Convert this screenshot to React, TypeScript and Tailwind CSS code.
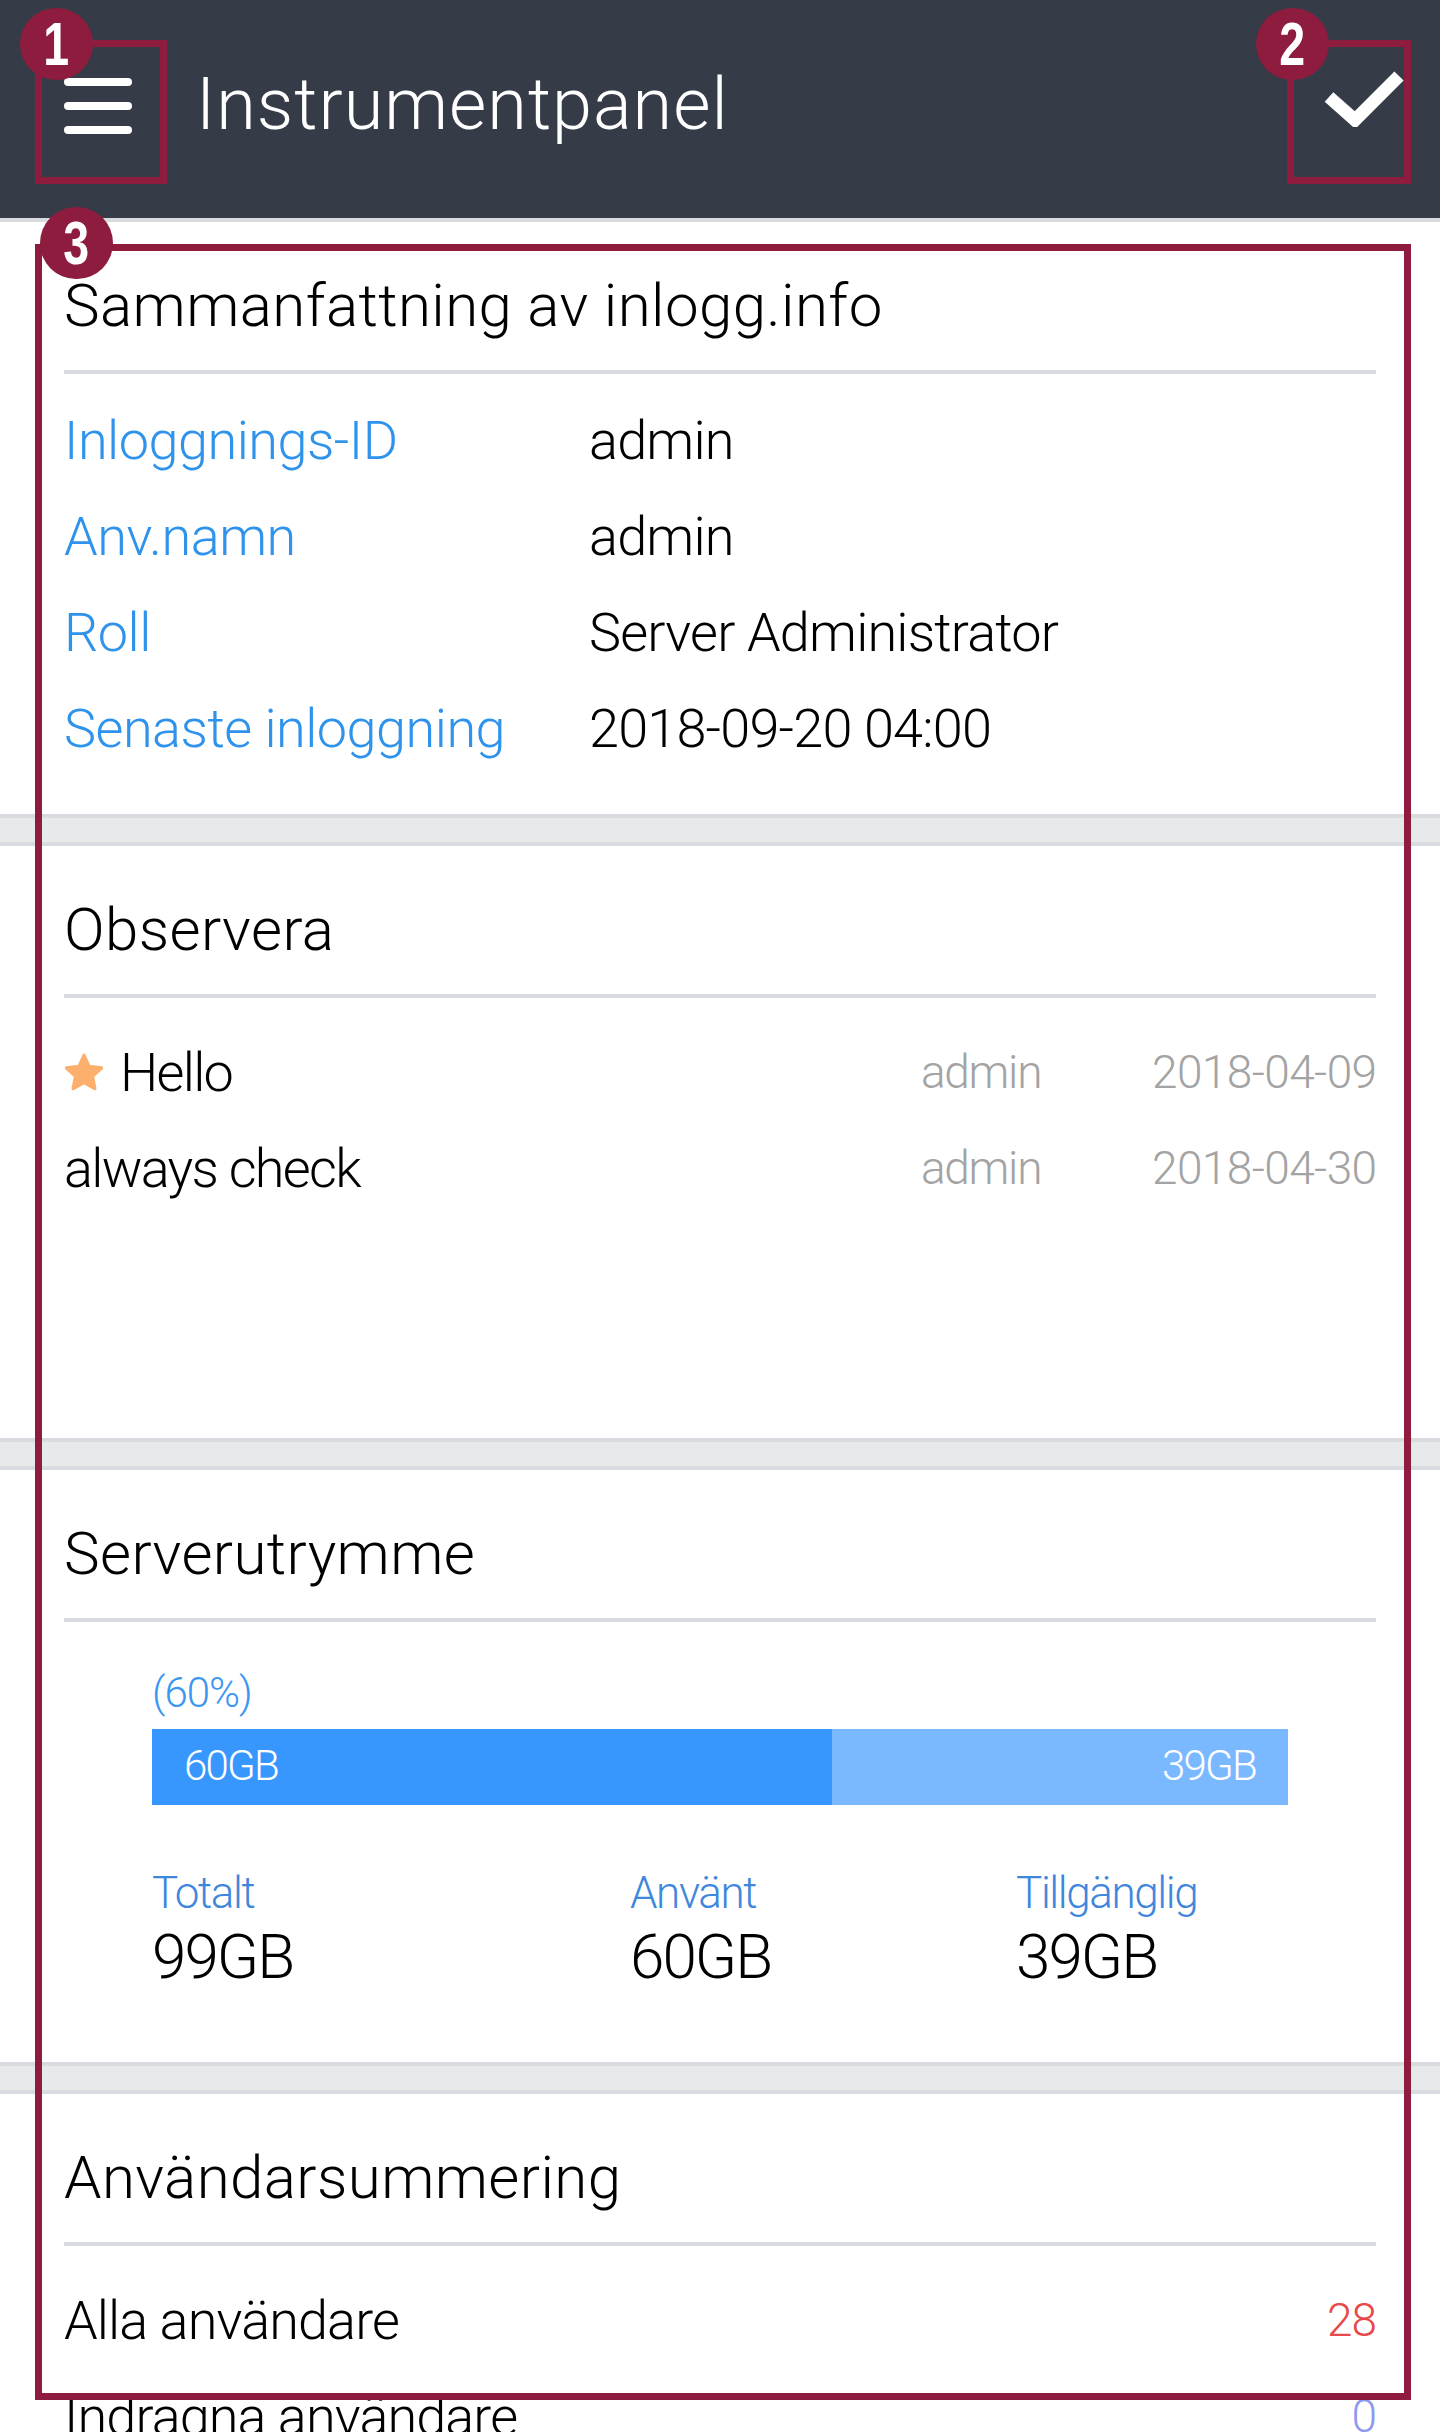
const font = "font-['Roboto','Noto_Sans',sans-serif]";

function Band() {
  return <div className="h-8 border-y-4 border-[#d8dbe0] bg-[#e8e9eb]" />;
}

function Section({ title, children }: { title: string; children: React.ReactNode }) {
  return (
    <section className="h-[592px] bg-white px-16">
      <div className="flex h-[152px] items-center border-b-4 border-[#d8dbe0] pt-[20px]">
        <h2 className="text-[60px] leading-none font-light tracking-[0.4px] text-black">{title}</h2>
      </div>
      {children}
    </section>
  );
}

function Info({ label, value }: { label: string; value: string }) {
  return (
    <div className="flex h-24 items-center text-[54px] font-light tracking-[-0.8px]">
      <span className="w-[525px] tracking-[-0.5px] text-[#2f93ec]">{label}</span>
      <span className="text-black">{value}</span>
    </div>
  );
}

function Note({ star, text, date }: { star?: boolean; text: string; date: string }) {
  return (
    <div className="flex h-24 items-center">
      {star && (
        <svg viewBox="0 0 24 24" className="mr-4 h-10 w-10 shrink-0">
          <path fill="#fdb06e" stroke="#fdb06e" strokeWidth="2" strokeLinejoin="round" d="M12 2l3 6.600 7.500 1-5.400 5 1.400 7.400L12 18.400 5.500 22l1.400-7.400-5.400-5 7.500-1z" />
        </svg>
      )}
      <span className="flex-1 text-[54px] font-light tracking-[-1.7px] text-black">{text}</span>
      <span className="w-[231px] text-[46px] font-light tracking-[-1.3px] text-[#a3a3a3]">admin</span>
      <span className="w-[224px] text-right text-[46px] font-light tracking-[-0.6px] whitespace-nowrap text-[#a3a3a3]">{date}</span>
    </div>
  );
}

function Stat({ label, value, cls }: { label: string; value: string; cls: string }) {
  return (
    <div className={cls}>
      <div className="text-[44px] leading-[52px] font-light tracking-[-1.400px] text-[#3f87dd]">{label}</div>
      <div className="mt-[2px] text-[62px] leading-[72px] font-light tracking-[-2px] text-black">{value}</div>
    </div>
  );
}

function UserRow({ label, value, color }: { label: string; value: string; color: string }) {
  return (
    <div className="flex h-24 items-center justify-between">
      <span className="text-[54px] font-light tracking-[-0.9px] text-black">{label}</span>
      <span className={`text-[46px] font-light tracking-[-1px] ${color}`}>{value}</span>
    </div>
  );
}

function Marker({ n, cls }: { n: string; cls: string }) {
  return (
    <div className={`absolute flex h-[72px] w-[73px] items-center justify-center rounded-full bg-[#8e1c3e] text-[62px] leading-none font-bold text-white font-['Liberation_Sans',sans-serif] ${cls}`}>
      <span className="inline-block scale-x-75">{n}</span>
    </div>
  );
}

export default function App() {
  return (
    <div className={`relative h-[2432px] w-[1440px] overflow-hidden bg-white ${font}`}>
      <header className="flex h-[222px] items-center border-b-4 border-[#d8dbe0] bg-[#353b47] pb-[8px] pl-16 pr-9">
        <div className="flex w-[132px] flex-col gap-4 pt-[2px]">
          <span className="h-2 w-[68px] rounded-full bg-white" />
          <span className="h-2 w-[68px] rounded-full bg-white" />
          <span className="h-2 w-[68px] rounded-full bg-white" />
        </div>
        <h1 className="flex-1 text-[72px] leading-none font-light tracking-[1px] text-white">Instrumentpanel</h1>
        <svg viewBox="0 0 80 57" className="h-[57px] w-[80px] -translate-y-[7px]">
          <path d="M5 27 L31 50 L75 6" fill="none" stroke="white" strokeWidth="13" />
        </svg>
      </header>

      <Section title="Sammanfattning av inlogg.info">
        <div className="pt-[18px]">
          <Info label="Inloggnings-ID" value="admin" />
          <Info label="Anv.namn" value="admin" />
          <Info label="Roll" value="Server Administrator" />
          <Info label="Senaste inloggning" value="2018-09-20 04:00" />
        </div>
      </Section>
      <Band />

      <Section title="Observera">
        <div className="pt-[26px]">
          <Note star text="Hello" date="2018-04-09" />
          <Note text="always check" date="2018-04-30" />
        </div>
      </Section>
      <Band />

      <Section title="Serverutrymme">
        <div className="px-[88px] pt-[41px]">
          <div className="text-[42px] leading-[60px] font-light tracking-[-1px] text-[#3a96f0]">(60%)</div>
          <div className="mt-[6px] flex h-[76px] items-center text-[42px] font-light tracking-[-1.800px] text-white">
            <div className="flex h-full w-[680px] items-center bg-[#3797ff] pl-8 pb-[4px]">60GB</div>
            <div className="flex h-full flex-1 items-center justify-end bg-[#7ab8ff] pr-8 pb-[4px]">39GB</div>
          </div>
          <div className="mt-[62px] flex">
            <Stat label="Totalt" value="99GB" cls="w-[478px]" />
            <Stat label="Använt" value="60GB" cls="w-[386px]" />
            <Stat label="Tillgänglig" value="39GB" cls="flex-1" />
          </div>
        </div>
      </Section>
      <Band />

      <Section title="Användarsummering">
        <div className="pt-[26px]">
          <UserRow label="Alla användare" value="28" color="text-[#e8494a]" />
          <UserRow label="Indragna användare" value="0" color="text-[#8f97f0]" />
        </div>
      </Section>

      <div className="absolute top-[40px] left-[35px] h-[144px] w-[132px] border-[7px] border-[#8e1c3e]" />
      <div className="absolute top-[40px] left-[1287px] h-[144px] w-[124px] border-[7px] border-[#8e1c3e]" />
      <div className="absolute top-[244px] left-[35px] h-[2156px] w-[1376px] border-[7px] border-[#8e1c3e]" />
      <Marker n="1" cls="top-[8px] left-[20px]" />
      <Marker n="2" cls="top-[8px] left-[1256px]" />
      <Marker n="3" cls="top-[207px] left-[40px]" />
    </div>
  );
}
